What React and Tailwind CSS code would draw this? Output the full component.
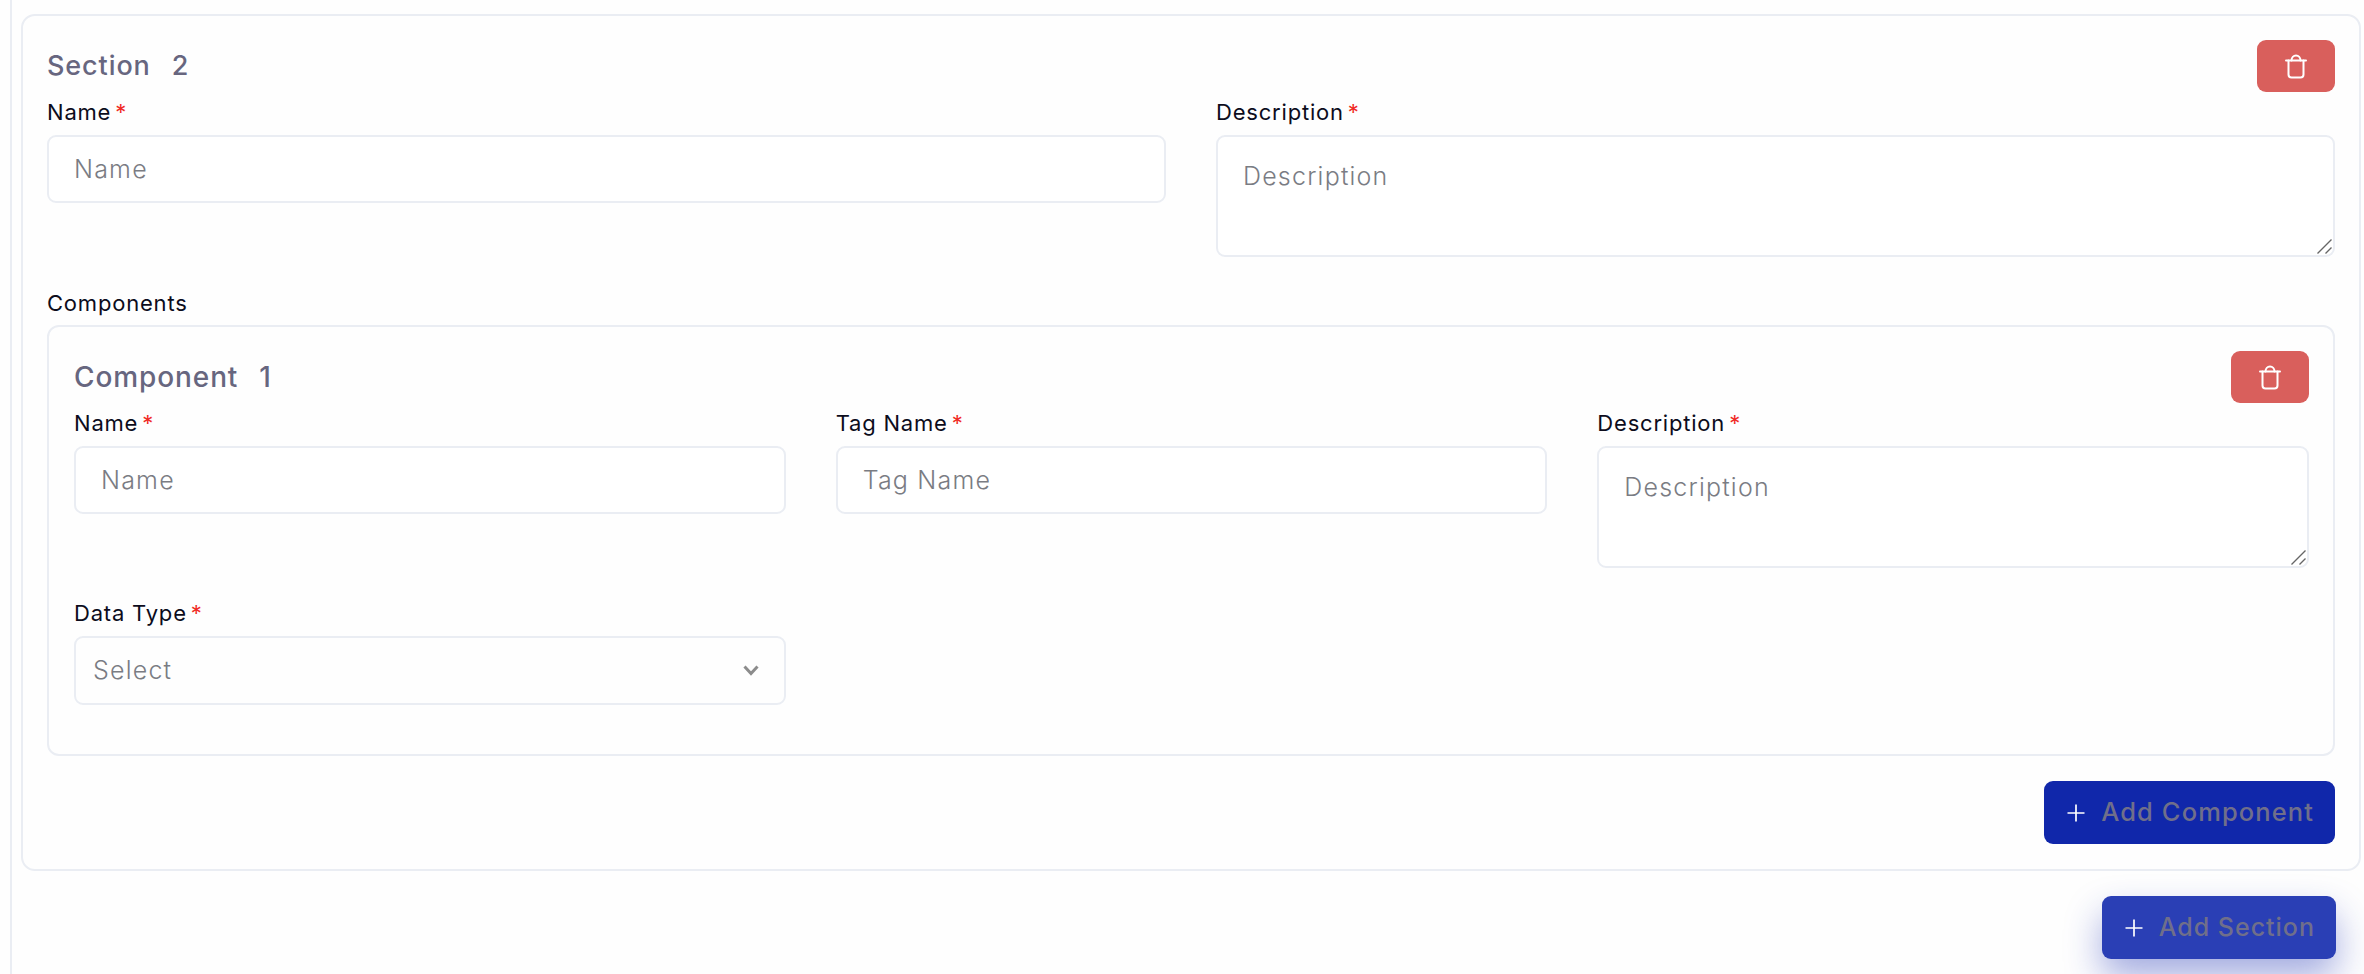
const font = { fontFamily: 'Inter, "Noto Sans", sans-serif' };

function Trash() {
  return (
    <svg width="22" height="25" viewBox="0 0 22 25" fill="none" stroke="#fff" strokeWidth="2" strokeLinecap="round" strokeLinejoin="round">
      <path d="M1 6.5h20" />
      <path d="M3.5 6.5V20.5a3 3 0 0 0 3 3h9a3 3 0 0 0 3-3V6.5" />
      <path d="M6.5 6.5C6.5 3.5 8.5 1.5 11 1.5s4.5 2 4.5 5" />
    </svg>
  );
}

function Plus() {
  return (
    <svg width="18" height="18" viewBox="0 0 18 18" fill="none" stroke="#fff" strokeWidth="1.7">
      <path d="M9 0.5v17M0.5 9h17" />
    </svg>
  );
}

function DeleteButton() {
  return (
    <button className="w-[78px] h-[52px] rounded-[9px] bg-[#d95f5c] flex items-center justify-center">
      <Trash />
    </button>
  );
}

function Label({ text, required = true }) {
  return (
    <div className="text-[22px] leading-[32px] font-normal text-[#0c0c1c] tracking-[0.8px] flex">
      <span>{text}</span>
      {required && <span className="text-[#f02a24] ml-[4px]">*</span>}
    </div>
  );
}

const fieldClass =
  "w-full bg-white border-2 border-[#eaedf3] rounded-[9px] outline-none px-[25px] text-[25px] tracking-[1.2px] font-light text-[#111] placeholder:text-[#7a7c83]";

function Field({ label, placeholder }) {
  return (
    <div>
      <div className="mb-[7px]"><Label text={label} /></div>
      <input className={`${fieldClass} h-[68px]`} style={font} placeholder={placeholder} />
    </div>
  );
}

function Area({ label, placeholder }) {
  return (
    <div>
      <div className="mb-[7px]"><Label text={label} /></div>
      <div className="relative h-[122px]">
        <textarea className={`${fieldClass} h-full block py-[21px] resize-none`} style={font} placeholder={placeholder} />
        <svg className="absolute right-[3px] bottom-[3px]" width="15" height="15" viewBox="0 0 15 15" fill="none" stroke="#666" strokeWidth="1.4">
          <path d="M0.5 14.5L14.5 0.5M8.5 14.5L14.5 8.5" />
        </svg>
      </div>
    </div>
  );
}

function Header({ title, number, titleClass }) {
  return (
    <div className="flex items-center justify-between h-[52px]">
      <div className={`font-medium text-[#67667f] tracking-[0.9px] flex ${titleClass}`}>
        <span>{title}</span>
        <span className="ml-[21px]">{number}</span>
      </div>
      <DeleteButton />
    </div>
  );
}

function AddButton({ label, className, textClass }) {
  return (
    <button className={`h-[63px] rounded-[9px] flex items-center pl-[23px] pr-[21px] gap-[16px] ${className}`}>
      <Plus />
      <span className={`font-medium text-[#706f8a] ${textClass}`}>{label}</span>
    </button>
  );
}

export default function App() {
  return (
    <div className="w-[2364px] h-[974px] overflow-hidden bg-[#fefefe]" style={font}>
      <div className="ml-[10px] h-full border-l-2 border-[#eaedf3] pl-[9px] pt-[14px]">
        <div className="w-[2340px] border-2 border-[#eaedf3] rounded-[14px] pl-[24px] pr-[24px] pt-[24px] pb-[25px]">
          <Header title="Section" number="2" titleClass="text-[27px]" />
          <div className="grid grid-cols-2 gap-x-[50px] mt-[4px]">
            <Field label="Name" placeholder="Name" />
            <Area label="Description" placeholder="Description" />
          </div>
          <div className="mt-[30px] mb-[6px]"><Label text="Components" required={false} /></div>
          <div className="border-2 border-[#eaedf3] rounded-[12px] pl-[25px] pr-[24px] pt-[24px] pb-[49px]">
            <Header title="Component" number="1" titleClass="text-[28px]" />
            <div className="grid grid-cols-3 gap-x-[50px] gap-y-[29px] mt-[4px]">
              <Field label="Name" placeholder="Name" />
              <Field label="Tag Name" placeholder="Tag Name" />
              <Area label="Description" placeholder="Description" />
              <div>
                <div className="mb-[7px]"><Label text="Data Type" /></div>
                <div className="relative h-[69px] border-2 border-[#eaedf3] rounded-[9px] flex items-center justify-between pl-[17px] pr-[25px]">
                  <span className="text-[25px] font-light tracking-[1.2px] text-[#7a7c83]">Select</span>
                  <svg width="16" height="11" viewBox="0 0 16 11" fill="none" stroke="#8c8c8c" strokeWidth="3">
                    <path d="M1.5 1.5L8 8.5L14.5 1.5" />
                  </svg>
                </div>
              </div>
            </div>
          </div>
          <div className="flex justify-end mt-[25px]">
            <AddButton label="Add Component" className="bg-[#1027aa]" textClass="text-[25.5px] tracking-[1.1px]" />
          </div>
        </div>
        <div className="flex justify-end mt-[25px] w-[2315px]">
          <AddButton label="Add Section" className="bg-[#2a3fb5] shadow-[0_18px_36px_rgba(30,50,180,0.4)]" textClass="text-[25px] tracking-[1px]" />
        </div>
      </div>
    </div>
  );
}
